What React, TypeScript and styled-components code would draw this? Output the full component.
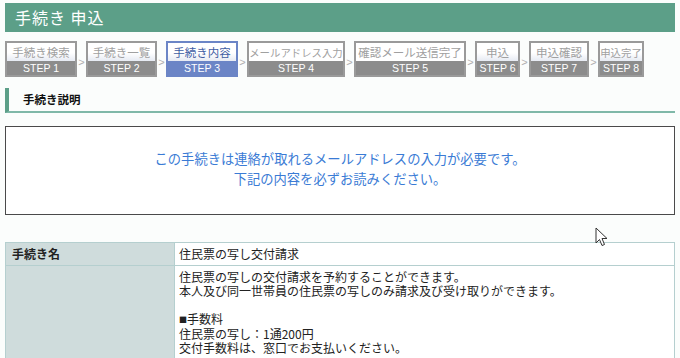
import React from 'react';
import styled, { createGlobalStyle } from 'styled-components';

const GlobalStyle = createGlobalStyle`
    html, body {
        margin: 0;
        padding: 0;
        background: #fbfdfc;
        font-family: "Noto Sans CJK JP", "Liberation Sans", sans-serif;
        overflow: hidden;
    }
`;

const Page = styled.div`
    position: relative;
    width: 680px;
    height: 358px;
    padding: 3px 5px 0 5px;
    box-sizing: border-box;
`;

const TitleBar = styled.div`
    height: 29px;
    background: #5c9f88;
    color: #ffffff;
    font-size: 16px;
    line-height: 29px;
    padding-left: 10px;
    letter-spacing: 1px;
`;

const StepRow = styled.div`
    display: flex;
    align-items: flex-start;
    margin-top: 9px;
    height: 36px;
`;

const Step = styled.div<{ $w: number; $active?: boolean }>`
    display: flex;
    flex-direction: column;
    width: ${p => p.$w}px;
    height: 36px;
    box-sizing: border-box;
    border: 2px solid ${p => (p.$active ? '#6b85c6' : '#9a9a9a')};
`;

const StepLabel = styled.div<{ $active?: boolean; $plain?: boolean; $fs: number }>`
    height: 19px;
    background: ${p => (p.$plain ? '#ffffff' : 'linear-gradient(#ffffff 55%, #e6eaf3)')};
    color: ${p => (p.$active ? '#3f5da3' : '#a0a0a0')};
    font-size: ${p => p.$fs}px;
    line-height: 19px;
    text-align: center;
    white-space: nowrap;
    overflow: hidden;
`;

const StepNo = styled.div<{ $active?: boolean }>`
    flex: 1;
    background: ${p => (p.$active ? '#6b85c6' : '#8c8c8c')};
    color: #ffffff;
    font-family: "Liberation Sans", sans-serif;
    font-size: 10.5px;
    line-height: 14px;
    text-align: center;
`;

const Arrow = styled.div`
    width: 9px;
    padding-top: 15px;
    color: #b0b0b0;
    font-family: "Liberation Sans", sans-serif;
    font-size: 11px;
    text-align: center;
`;

const SectionHead = styled.div`
    margin-top: 11px;
    height: 23px;
    border-left: 4px solid #5c9f88;
    border-bottom: 2px solid #7fb8a8;
    padding-left: 14px;
    font-size: 11.5px;
    font-weight: bold;
    line-height: 22px;
    color: #111;
`;

const Notice = styled.div`
    margin-top: 13px;
    height: 89px;
    box-sizing: border-box;
    border: 1px solid #4a4a4a;
    background: #ffffff;
    display: flex;
    flex-direction: column;
    justify-content: center;
    align-items: center;
    color: #3a7bd5;
    font-size: 13.3px;
    line-height: 20px;
    padding-bottom: 3px;
`;

const Table = styled.table`
    margin-top: 27px;
    width: 670px;
    border-collapse: collapse;
    font-size: 12px;
    line-height: 14px;
    color: #222;
`;

const Th = styled.th`
    width: 156px;
    background: #cfdcdc;
    border: 1px solid #b5cfcf;
    text-align: left;
    vertical-align: top;
    padding: 4px 6px;
    font-weight: bold;
`;

const Td = styled.td`
    background: #ffffff;
    border: 1px solid #b5cfcf;
    padding: 4px 4px;
    vertical-align: top;
`;

const Line = styled.div<{ $gap?: boolean }>`
    line-height: 14px;
    min-height: 14px;
    margin-top: ${p => (p.$gap ? '14px' : '0')};
    white-space: nowrap;
`;

const Mark = styled.span`
    font-size: 8px;
    vertical-align: 1px;
`;

const Cursor = styled.svg`
    position: absolute;
    left: 595px;
    top: 227px;
`;

const steps = [
    { label: '手続き検索', w: 72, fs: 11.5 },
    { label: '手続き一覧', w: 71, fs: 11.5 },
    { label: '手続き内容', w: 72, fs: 11.5, active: true },
    { label: 'メールアドレス入力', w: 98, fs: 10.4, plain: true },
    { label: '確認メール送信完了', w: 112, fs: 11.5, plain: true },
    { label: '申込', w: 45, fs: 11.5 },
    { label: '申込確認', w: 60, fs: 11.5 },
    { label: '申込完了', w: 46, fs: 10.4 },
];

const App: React.FC = () => {
    return (
        <Page>
            <GlobalStyle />
            <TitleBar>手続き 申込</TitleBar>
            <StepRow>
                {steps.map((s, i) => (
                    <React.Fragment key={s.label}>
                        {i > 0 && <Arrow>&gt;</Arrow>}
                        <Step $w={s.w} $active={s.active}>
                            <StepLabel $active={s.active} $plain={s.plain} $fs={s.fs}>{s.label}</StepLabel>
                            <StepNo $active={s.active}>STEP {i + 1}</StepNo>
                        </Step>
                    </React.Fragment>
                ))}
            </StepRow>
            <SectionHead>手続き説明</SectionHead>
            <Notice>
                <div>この手続きは連絡が取れるメールアドレスの入力が必要です。</div>
                <div>下記の内容を必ずお読みください。</div>
            </Notice>
            <Table>
                <tbody>
                    <tr>
                        <Th>手続き名</Th>
                        <Td>住民票の写し交付請求</Td>
                    </tr>
                    <tr>
                        <Th></Th>
                        <Td>
                            <Line>住民票の写しの交付請求を予約することができます。</Line>
                            <Line>本人及び同一世帯員の住民票の写しのみ請求及び受け取りができます。</Line>
                            <Line $gap><Mark>■</Mark>手数料</Line>
                            <Line>住民票の写し：1通200円</Line>
                            <Line>交付手数料は、窓口でお支払いください。</Line>
                            <Line />
                        </Td>
                    </tr>
                </tbody>
            </Table>
            <Cursor width="14" height="20" viewBox="0 0 14 20">
                <path d="M1 1 L1 16 L4.5 12.5 L7 18.5 L9.5 17.5 L7 11.5 L12 11.5 Z" fill="#ffffff" stroke="#333" strokeWidth="1" strokeLinejoin="round" />
            </Cursor>
        </Page>
    );
};

export default App;
